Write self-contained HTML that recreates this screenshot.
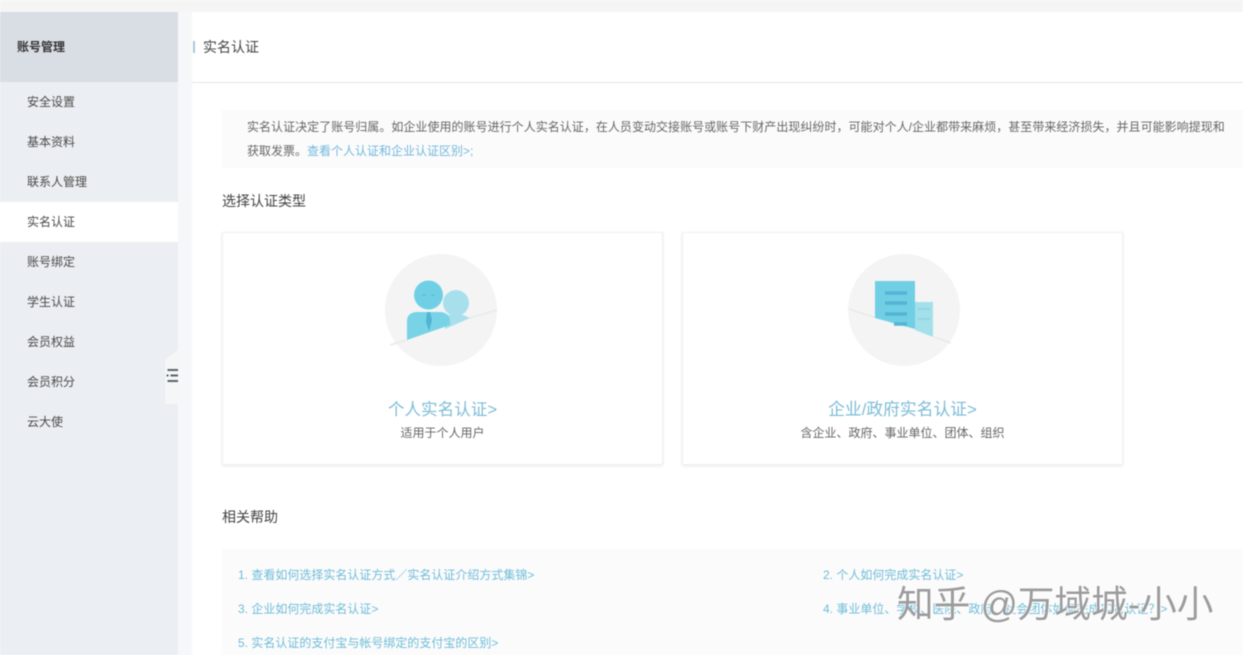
<!DOCTYPE html>
<html lang="zh-CN">
<head>
<meta charset="utf-8">
<title>实名认证</title>
<style>
html,body{margin:0;padding:0;background:#fff}
body{width:1243px;height:655px;overflow:hidden;position:relative;font-family:"Liberation Sans","Noto Sans CJK SC",sans-serif;color:#555}
#w{position:absolute;left:0;top:0;width:1243px;height:655px;overflow:hidden;background:#f5f5f6;filter:blur(.4px)}
.a{position:absolute;white-space:nowrap}
.nav{position:absolute;left:0;width:178px;height:40px;line-height:40px;font-size:12px;color:#4a4a4a;text-indent:27px}
.l{color:#6fbdd6}
.card{position:absolute;top:232px;width:439px;height:231px;background:#fff;border:1px solid #f0f0f0;box-shadow:0 1px 3px rgba(0,0,0,.09)}
.t{position:absolute;left:0;right:0;text-align:center;white-space:nowrap}
</style>
</head>
<body>
<div id="w">
  <div class="a" style="left:0;top:12px;width:178px;height:643px;background:#ebeef2"></div>
  <div class="a" style="left:178px;top:12px;width:14px;height:643px;background:#f6f7f9"></div>
  <div class="a" style="left:0;top:12px;width:178px;height:70px;background:#d9dde4"></div>
  <div class="a" style="left:17px;top:39px;font-size:12px;line-height:17px;color:#333;font-weight:700">账号管理</div>
  <div class="nav" style="top:82px">安全设置</div>
  <div class="nav" style="top:122px">基本资料</div>
  <div class="nav" style="top:162px">联系人管理</div>
  <div class="nav" style="top:202px;height:40px;background:#fff">实名认证</div>
  <div class="nav" style="top:242px">账号绑定</div>
  <div class="nav" style="top:282px">学生认证</div>
  <div class="nav" style="top:322px">会员权益</div>
  <div class="nav" style="top:362px">会员积分</div>
  <div class="nav" style="top:402px">云大使</div>

  <svg class="a" style="left:165px;top:350px" width="13" height="54" viewBox="0 0 13 54">
    <path d="M0 10 L13 0 V54 H0Z" fill="#f5f6f8"/>
    <path d="M2.500 20H13M2.500 31H13M5.500 25.500H13" stroke="#59636e" stroke-width="2" fill="none"/>
    <path d="M2.500 24.500v2" stroke="#59636e" stroke-width="2"/>
  </svg>

  <div class="a" style="left:192px;top:12px;width:1051px;height:643px;background:#fff"></div>
  <div class="a" style="left:192px;top:82px;width:1051px;height:1px;background:#e2e3e5"></div>
  <div class="a" style="left:193px;top:41px;width:2px;height:12px;background:#a9c7d6"></div>
  <div class="a" style="left:203px;top:38px;font-size:14px;line-height:18px;color:#444">实名认证</div>

  <div class="a" style="left:222px;top:110px;width:1021px;height:58px;background:#fbfbfc"></div>
  <div class="a" style="left:247px;top:119px;font-size:12px;letter-spacing:.03px;line-height:17px;color:#666">实名认证决定了账号归属。如企业使用的账号进行个人实名认证，在人员变动交接账号或账号下财产出现纠纷时，可能对个人/企业都带来麻烦，甚至带来经济损失，并且可能影响提现和</div>
  <div class="a" style="left:247px;top:143px;font-size:12px;line-height:17px;color:#666">获取发票。<span style="color:#72b9da">查看个人认证和企业认证区别&gt;;</span></div>

  <div class="a" style="left:222px;top:192px;font-size:14px;line-height:18px;color:#444">选择认证类型</div>

  <div class="card" style="left:222px">
    <svg class="a" style="left:162px;top:20px" width="114" height="114" viewBox="0 0 114 114">
      <circle cx="56" cy="57" r="56" fill="#f4f4f4"/>
      <path d="M5 92 L22 87 M85 65 L112 57" stroke="#ececec" stroke-width="2" fill="none"/>
      <circle cx="71" cy="50" r="13" fill="#a7e0ec"/>
      <path d="M60 76 V62 H78 L85 65 Z" fill="#a7e0ec"/>
      <path d="M22 87 V68 Q22 60 31 59 H56 Q65 60 65 69 V72Z" fill="#79d3e6"/>
      <circle cx="43.500" cy="42" r="14.500" fill="#6fd0e5"/>
      <path d="M37 42h4M46 42h4" stroke="#55b7cf" stroke-width="1"/>
      <path d="M42 59h3l2 8-3 11-3-9z" fill="#4fb5d2"/>
    </svg>
    <div class="t" style="top:166px;font-size:16.600px;line-height:22px;color:#7dbcd6">个人实名认证&gt;</div>
    <div class="t" style="top:192px;font-size:12px;line-height:17px;color:#666">适用于个人用户</div>
  </div>

  <div class="card" style="left:682px">
    <svg class="a" style="left:165px;top:20px" width="114" height="114" viewBox="0 0 114 114">
      <circle cx="56" cy="57" r="56" fill="#f4f4f4"/>
      <path d="M1 56 L28 65 M86 84 L103 90" stroke="#e9e9e9" stroke-width="1.500" fill="none"/>
      <path d="M67 49 H85 V84 L67 77Z" fill="#a3e0ea"/>
      <path d="M70 56h12M70 66h12" stroke="#86d2df" stroke-width="1.200"/>
      <path d="M27 28 H67 V76 L27 65Z" fill="#70cfe5"/>
      <path d="M37 40h22M37 50h22M37 61h22M46 71h13" stroke="#54b5d3" stroke-width="3.500"/>
    </svg>
    <div class="t" style="top:166px;font-size:16.800px;line-height:22px;color:#7dbcd6">企业/政府实名认证&gt;</div>
    <div class="t" style="top:192px;font-size:12px;line-height:17px;color:#666">含企业、政府、事业单位、团体、组织</div>
  </div>

  <div class="a" style="left:222px;top:508px;font-size:14px;line-height:18px;color:#444">相关帮助</div>

  <div class="a" style="left:222px;top:549px;width:1021px;height:106px;background:#fbfbfc"></div>
  <div class="a l" style="left:238px;top:567px;font-size:12px;line-height:17px">1. 查看如何选择实名认证方式／实名认证介绍方式集锦&gt;</div>
  <div class="a l" style="left:238px;top:601px;font-size:12px;line-height:17px">3. 企业如何完成实名认证&gt;</div>
  <div class="a l" style="left:238px;top:635px;font-size:12px;line-height:17px">5. 实名认证的支付宝与帐号绑定的支付宝的区别&gt;</div>
  <div class="a l" style="left:823px;top:567px;font-size:12px;line-height:17px">2. 个人如何完成实名认证&gt;</div>
  <div class="a l" style="left:823px;top:601px;font-size:12px;line-height:17px">4. 事业单位、学校、医院、政府、社会团体如何完成实名认证？&gt;</div>

  <div class="a" style="left:897px;top:582px;font-size:36.700px;line-height:46px;color:#9c9c9c;text-shadow:1px 1px 0 rgba(255,255,255,.85),-1px 0 0 rgba(255,255,255,.6)">知乎 @万域城-小小</div>
</div>
</body>
</html>
